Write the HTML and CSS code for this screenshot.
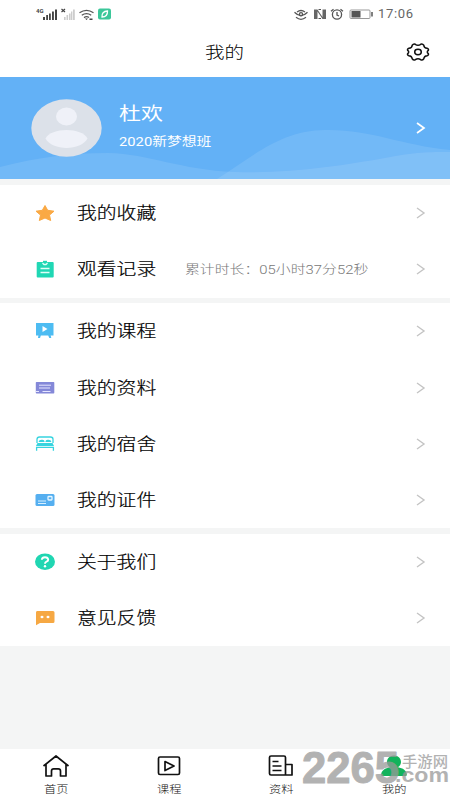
FILE: index.html
```html
<!DOCTYPE html>
<html lang="zh-CN">
<head>
<meta charset="utf-8">
<title>我的</title>
<link rel="stylesheet" href="styles.css">
</head>
<body>
<div class="screen">
  <header class="status">
    <svg class="status-left" width="76" height="16" viewBox="0 0 76 16">
      <text x="0" y="6.500" class="net">4G</text>
      <g fill="#444"><path d="M7 11h2v3H7zM10.200 9h1.800v5h-1.800zM13 7.500h1.800V14H13zM16 5.500h1.900V14H16zM19 3.500h2V14h-2z"/></g>
      <g fill="#ccc"><path d="M28 11h1.600v3H28zM30.500 9h1.600v5h-1.600zM33 7.500h1.600V14H33zM35 5.500h1.400V14H35zM37 3.500h1.800V14H37z"/></g>
      <path d="M25.500 3l3.500 3m0-3l-3.500 3" stroke="#444" stroke-width="1.200"/>
      <g fill="none" stroke="#555" stroke-width="1.300"><path d="M43.500 6.700q7-4.800 14 0M45.800 9.200q4.700-3.200 9.400 0M48 11.600q2.600-1.800 5 0"/></g>
      <path d="M49 12.500h3L50.500 14zM53.500 12.500h3v1.500h-3z" fill="#444"/>
      <rect x="62" y="2.500" width="13" height="11" rx="2" fill="#3cc79a"/>
      <path d="M66 11q-.5-5.500 5.500-6 .2 6-5.500 6z" fill="none" stroke="#fff" stroke-width="1.300"/>
    </svg>
    <div class="status-right">
      <svg width="80" height="16" viewBox="0 0 80 16" fill="none" stroke="#555" stroke-width="1.300">
        <path d="M.5 6.300Q7 13 13.500 6.300M2 11.300q5 4 10 0M3 6Q7 3 11 6"/><circle cx="7" cy="8.300" r="1.600"/>
        <path d="M20 3.500h3.500l5 7.500V3.500H32v9.500h-3.500l-5-7.500V13H20z" fill="#666" stroke="none"/><path d="M24.500 3.500h2.500M24.500 12.500h2.500" stroke-width="1"/>
        <circle cx="43" cy="8.500" r="4.600"/><path d="M43 6v3l2 1M37 5.300l2.500-2M46.500 3.300l2.500 2"/>
        <rect x="56" y="4" width="20" height="8.500" rx="1" stroke="#999" stroke-width="1"/><rect x="57.500" y="5" width="9" height="6.500" fill="#555" stroke="none"/><path d="M78 6v4.500" stroke-width="1.500"/>
      </svg>
      <span class="clock">17:06</span>
    </div>
  </header>

  <div class="titlebar">
    <h1><span class="wide">我的</span></h1>
    <svg class="gear" width="24" height="18" viewBox="0 0 24 18" fill="none" stroke="#111" stroke-width="1.500" stroke-linejoin="round"><path d="M6.200 2.300Q7.500.5 9.300 1.300Q12 3.300 14.700 1.300Q16.500.5 17.800 2.300Q18.200 5 21 5.300Q23 6 22.300 7.400Q20.300 9 22.300 10.600Q23 12 21 12.700Q18.200 13 17.800 15.700Q16.500 17.500 14.700 16.700Q12 14.700 9.300 16.700Q7.500 17.500 6.200 15.700Q5.800 13 3 12.700Q1 12 1.700 10.600Q3.700 9 1.700 7.400Q1 6 3 5.300Q5.800 5 6.200 2.300z"/><ellipse cx="12" cy="9" rx="3.300" ry="2.700"/></svg>
  </div>

  <section class="profile">
    <svg class="waves" width="450" height="102" viewBox="0 0 450 102" fill="#fff">
      <path opacity=".1" d="M0 90C40 80 70 76 108 76C150 77 180 93 235 95C290 97 345 88 385 81C415 75 430 75 450 75V102H0z"/>
      <path opacity=".1" d="M217 102C250 82 280 53 325 53C370 52 400 68 450 73V102z"/>
    </svg>
    <svg class="avatar" width="71" height="58" viewBox="0 0 71 58"><ellipse cx="35.500" cy="29" rx="35.200" ry="28.800" fill="#dce1e9"/><ellipse cx="35.500" cy="17.500" rx="10.500" ry="9" fill="#eff1f8"/><path d="M14.500 39.500C20 28 51 28 56.500 39.500C50 52 21 52 14.500 39.500z" fill="#eff1f8"/></svg>
    <div class="who"><div class="name"><span class="wide">杜欢</span></div><div class="class"><span class="wide">2020新梦想班</span></div></div>
    <svg class="arrow light" width="10" height="12" viewBox="0 0 10 12"><path d="M1 1l7 5-7 5"/></svg>
  </section>

  <main>
    <section class="group">
      <div class="row"><svg class="icon" viewBox="0 0 20 18"><path d="M10 1.500l2.700 4.800 6.300.9-4.500 3.900 1.200 5.400L10 14l-5.700 2.500 1.200-5.400L1 7.200l6.300-.9z" fill="#faa944" stroke="#faa944" stroke-linejoin="round"/></svg><span class="label"><span class="wide">我的收藏</span></span><svg class="arrow" width="10" height="12" viewBox="0 0 10 12"><path d="M1 1l7 5-7 5"/></svg></div>
      <div class="row"><svg class="icon" viewBox="0 0 20 18"><rect x="1.700" y="2" width="17" height="15.500" rx="1" fill="#20d7b4"/><path d="M8 .8h4v2.700H8z" fill="#20d7b4"/><path d="M7.500 3l1.500 1.500h2L12.500 3M5.500 8.500h9M5.500 12.500h9" fill="none" stroke="#dffff8" stroke-width="1.300"/></svg><span class="label"><span class="wide">观看记录</span></span><span class="note"><span class="wide">累计时长：05小时37分52秒</span></span><svg class="arrow" width="10" height="12" viewBox="0 0 10 12"><path d="M1 1l7 5-7 5"/></svg></div>
    </section>
    <section class="group">
      <div class="row"><svg class="icon" viewBox="0 0 20 18"><path d="M1 1h17.500v12.500H1zM3.500 13h2.500l-1 3H3zM13 13h2.500l.8 3h-2z" fill="#4dbcf2"/><path d="M7.500 4l5 3-5 3z" fill="#fff"/></svg><span class="label"><span class="wide">我的课程</span></span><svg class="arrow" width="10" height="12" viewBox="0 0 10 12"><path d="M1 1l7 5-7 5"/></svg></div>
      <div class="row"><svg class="icon" viewBox="0 0 20 18"><rect x=".8" y="3" width="18.500" height="11.500" rx=".7" fill="#8488d8"/><path d="M4 6.200h12M4 9h11M1 12.500h3M7.500 12.500h8" stroke="#e6e6ff"/></svg><span class="label"><span class="wide">我的资料</span></span><svg class="arrow" width="10" height="12" viewBox="0 0 10 12"><path d="M1 1l7 5-7 5"/></svg></div>
      <div class="row"><svg class="icon" viewBox="0 0 20 18"><path d="M2 8V4.200Q2 2 4.500 2h11Q18 2 18 4.200V8" fill="none" stroke="#37d4df" stroke-width="1.300"/><path d="M3.500 7Q4 4.500 7 4.700Q9.500 4.500 9.700 7zM10.300 7Q10.500 4.500 13 4.700Q16 4.500 16.500 7zM2.500 8h15L19 11H1z" fill="#37d4df"/><path d="M1 12.300h18M1.600 12v3.700M18.400 12v3.700" stroke="#37d4df" stroke-width="1.300"/></svg><span class="label"><span class="wide">我的宿舍</span></span><svg class="arrow" width="10" height="12" viewBox="0 0 10 12"><path d="M1 1l7 5-7 5"/></svg></div>
      <div class="row"><svg class="icon" viewBox="0 0 20 18"><rect x=".5" y="3" width="19" height="12" rx="1.500" fill="#55aff0"/><rect x="13" y="5.500" width="4" height="3.500" rx=".7" fill="none" stroke="#e8f7ff" stroke-width="1.300"/><path d="M3 10h8M3 12.500h8" stroke="#d8f0ff"/></svg><span class="label"><span class="wide">我的证件</span></span><svg class="arrow" width="10" height="12" viewBox="0 0 10 12"><path d="M1 1l7 5-7 5"/></svg></div>
    </section>
    <section class="group">
      <div class="row"><svg class="icon" viewBox="0 0 20 18"><ellipse cx="10" cy="8.700" rx="10" ry="8.300" fill="#20d6b2"/><path d="M6.800 6.800Q7 4.200 10 4.200T13.200 6.700Q13.200 8 11.500 8.700Q10 9.300 10 10.800" fill="none" stroke="#fff" stroke-width="1.900"/><circle cx="10" cy="13.300" r="1.200" fill="#fff"/></svg><span class="label"><span class="wide">关于我们</span></span><svg class="arrow" width="10" height="12" viewBox="0 0 10 12"><path d="M1 1l7 5-7 5"/></svg></div>
      <div class="row"><svg class="icon" viewBox="0 0 20 18"><path d="M2 2h16q1.500 0 1.500 1.500v9q0 1.500-1.500 1.500H5l-4 2.200V3.500Q1 2 2 2z" fill="#f6a843"/><ellipse cx="7" cy="8" rx="1.500" ry="1.200" fill="#fff"/><ellipse cx="13" cy="8" rx="1.500" ry="1.200" fill="#fff"/></svg><span class="label"><span class="wide">意见反馈</span></span><svg class="arrow" width="10" height="12" viewBox="0 0 10 12"><path d="M1 1l7 5-7 5"/></svg></div>
    </section>
  </main>

  <nav class="tabs">
    <a class="tab"><svg width="28" height="24" viewBox="0 0 28 24"><path d="M1.500 12L14 2l12.500 10M4 10.500V22h5.500v-5q0-2.200 2.200-2.200h4.600q2.200 0 2.200 2.200v5H24V10.500"/></svg><span class="wide">首页</span></a>
    <a class="tab"><svg width="28" height="24" viewBox="0 0 28 24"><rect x="3.500" y="3" width="21" height="17.500" rx="1.500"/><path d="M10 7.500l9 4.500-9 4.500z"/></svg><span class="wide">课程</span></a>
    <a class="tab"><svg width="28" height="24" viewBox="0 0 28 24"><path d="M18.500 21H4q-1.500 0-1.500-1.500v-16Q2.500 2 4 2h13q1.500 0 1.500 1.500V21H25V10.500h-6.500M5.500 7.500h6M5.500 12h9M5.500 16.500h9"/></svg><span class="wide">资料</span></a>
    <a class="tab"><svg class="person" width="28" height="24" viewBox="0 0 28 24"><path d="M14 1.500c4.500 0 7 3 7 6.500 0 2.700-1.500 4-3 5.200 5 .8 8.500 3.300 8.800 7.300 0 1.200-.5 1.500-1.500 1.500H2.700c-1 0-1.500-.3-1.500-1.500C1.500 16.500 5 14 10 13.200 8.500 12 7 10.700 7 8c0-3.500 2.500-6.500 7-6.500z"/></svg><span class="wide">我的</span></a>
    <svg class="watermark" width="150" height="44" viewBox="0 0 150 44">
      <text class="digits" x="2" y="33.500" textLength="97" lengthAdjust="spacingAndGlyphs">2265</text>
      <text class="site" x="102" y="17.500" textLength="46" lengthAdjust="spacingAndGlyphs">手游网</text>
      <text class="com" x="95" y="33" textLength="54" lengthAdjust="spacingAndGlyphs">.com</text>
    </svg>
  </nav>
</div>
</body>
</html>
```
FILE: styles.css
```css
* { box-sizing: border-box; }
body { margin: 0; font-family: Roboto, "Noto Sans CJK SC", sans-serif; font-weight: 300; color: #000; }
svg { display: block; flex: none; }
.screen { width: 450px; height: 800px; display: flex; flex-direction: column; background: #f4f5f5; overflow: hidden; }

/* Wide letterforms used across the interface */
.wide { display: inline-block; transform: scaleX(1.2); transform-origin: left center; white-space: nowrap; }

.status { height: 28px; padding: 6px 36px 0; display: flex; justify-content: space-between; background: #fff; }
.net { font: bold 6px Roboto, sans-serif; fill: #444; }
.status-right { display: flex; gap: 4px; }
.clock { width: 36px; font-size: 13px; line-height: 16px; letter-spacing: .7px; font-weight: 400; color: #666; }

.titlebar { height: 49px; padding-right: 20px; display: flex; align-items: center; background: #fff; }
h1 { flex: 1; margin: 0; padding: 1px 0 0 205px; font-size: 16.300px; line-height: 24px; font-weight: 300; }
.gear { margin-bottom: 1px; }

.profile { position: relative; height: 102px; padding: 0 24px 0 31px; display: flex; align-items: center; background: #63b1f6; color: #fff; }
.waves { position: absolute; left: 0; top: 0; }
.avatar, .who, .profile .arrow { position: relative; }
.who { flex: 1; padding: 0 0 4px 17px; font-weight: 400; }
.name { font-size: 18.300px; line-height: 27px; }
.class { margin-top: 5px; font-size: 12.300px; line-height: 20px; }

main { flex: 1; padding-top: 6px; display: flex; flex-direction: column; gap: 5.500px; }
.group { background: #fff; }
.row { height: 56.300px; padding: 0 24px 0 35px; display: flex; align-items: center; }
.icon { width: 20px; height: 18px; margin-right: 22px; }
.label { width: 108px; padding-top: 2px; font-size: 16.500px; line-height: 24px; -webkit-text-stroke: .2px #000; }
.note { padding-top: 2px; font-size: 12.400px; line-height: 20px; color: #777; }
.arrow { margin-left: auto; fill: none; stroke: #c4c4c4; stroke-width: 1.400; }
.light { stroke: #fff; stroke-width: 1.700; }

.tabs { position: relative; height: 51px; display: flex; background: #fff; }
.tab { flex: 1; padding-top: 5px; display: flex; flex-direction: column; align-items: center; font-size: 10.200px; line-height: 15px; color: #111; }
.tab svg { margin-bottom: 4px; fill: none; stroke: #111; stroke-width: 1.700; stroke-linejoin: round; }
.tab .wide { transform-origin: center; }
.tab .person { fill: #12b35c; stroke: none; }
.watermark { position: absolute; left: 300px; top: 0; fill: #999; opacity: .75; }
.digits { font: bold 44px "Liberation Sans", sans-serif; stroke: #999; stroke-width: 1; stroke-linejoin: round; }
.site { font: 500 15px "Noto Sans CJK SC", sans-serif; }
.com { font: bold 21px "Liberation Sans", sans-serif; }
```
